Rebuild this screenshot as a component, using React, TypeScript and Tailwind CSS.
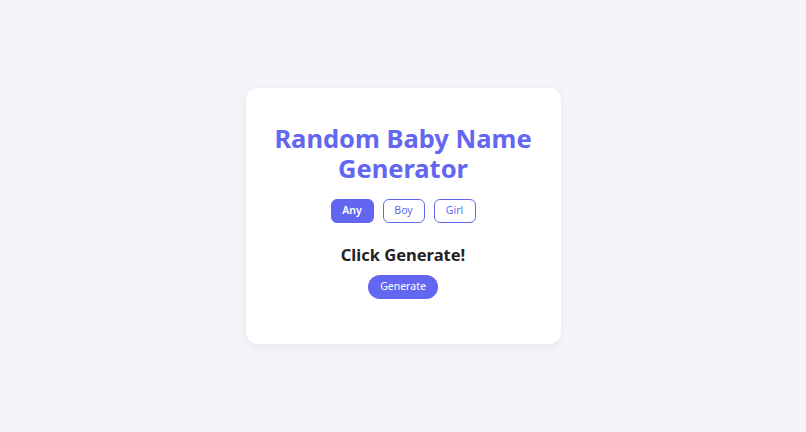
import React, { useState } from 'react';

const NAMES = {
  boy: ['Liam', 'Noah', 'Oliver', 'Elijah', 'James', 'Lucas', 'Henry', 'Theo'],
  girl: ['Olivia', 'Emma', 'Ava', 'Sophia', 'Isabella', 'Mia', 'Luna', 'Ella'],
};

type Gender = 'any' | 'boy' | 'girl';

const App: React.FC = () => {
  const [gender, setGender] = useState<Gender>('any');
  const [name, setName] = useState<string | null>(null);

  const generate = () => {
    const pool =
      gender === 'any' ? [...NAMES.boy, ...NAMES.girl] : NAMES[gender];
    setName(pool[Math.floor(Math.random() * pool.length)]);
  };

  const options: { key: Gender; label: string }[] = [
    { key: 'any', label: 'Any' },
    { key: 'boy', label: 'Boy' },
    { key: 'girl', label: 'Girl' },
  ];

  return (
    <div className="min-h-screen w-full bg-[#f4f5f9] flex items-center justify-center font-['Noto_Sans','Open_Sans',sans-serif]">
      <div className="w-[315px] h-[256px] bg-white rounded-xl shadow-[0_2px_10px_rgba(0,0,0,0.06)] flex flex-col items-center pt-[35px]">
        <h1 className="text-[25.5px] leading-[30px] font-bold text-[#6366f1] text-center">
          Random Baby Name
          <br />
          Generator
        </h1>

        {/* Gender filter */}
        <div className="flex gap-[9px] mt-[16px]">
          {options.map((o) => (
            <button
              key={o.key}
              onClick={() => setGender(o.key)}
              className={
                gender === o.key
                  ? 'h-[24px] w-[43px] rounded-md border-[1.5px] border-[#6366f1] bg-[#6366f1] text-white text-[10.5px] font-semibold'
                  : 'h-[24px] w-[42px] rounded-md border-[1.5px] border-[#6366f1] bg-white text-[#6366f1] text-[10.5px]'
              }
            >
              {o.label}
            </button>
          ))}
        </div>

        <h2 className="mt-[20px] text-[16.5px] leading-[24px] font-bold text-[#222]">
          {name ?? 'Click Generate!'}
        </h2>

        <button
          onClick={generate}
          className="mt-[8px] h-[24px] w-[70px] rounded-full bg-[#6366f1] text-white text-[10.5px]"
        >
          Generate
        </button>
      </div>
    </div>
  );
};

export default App;
